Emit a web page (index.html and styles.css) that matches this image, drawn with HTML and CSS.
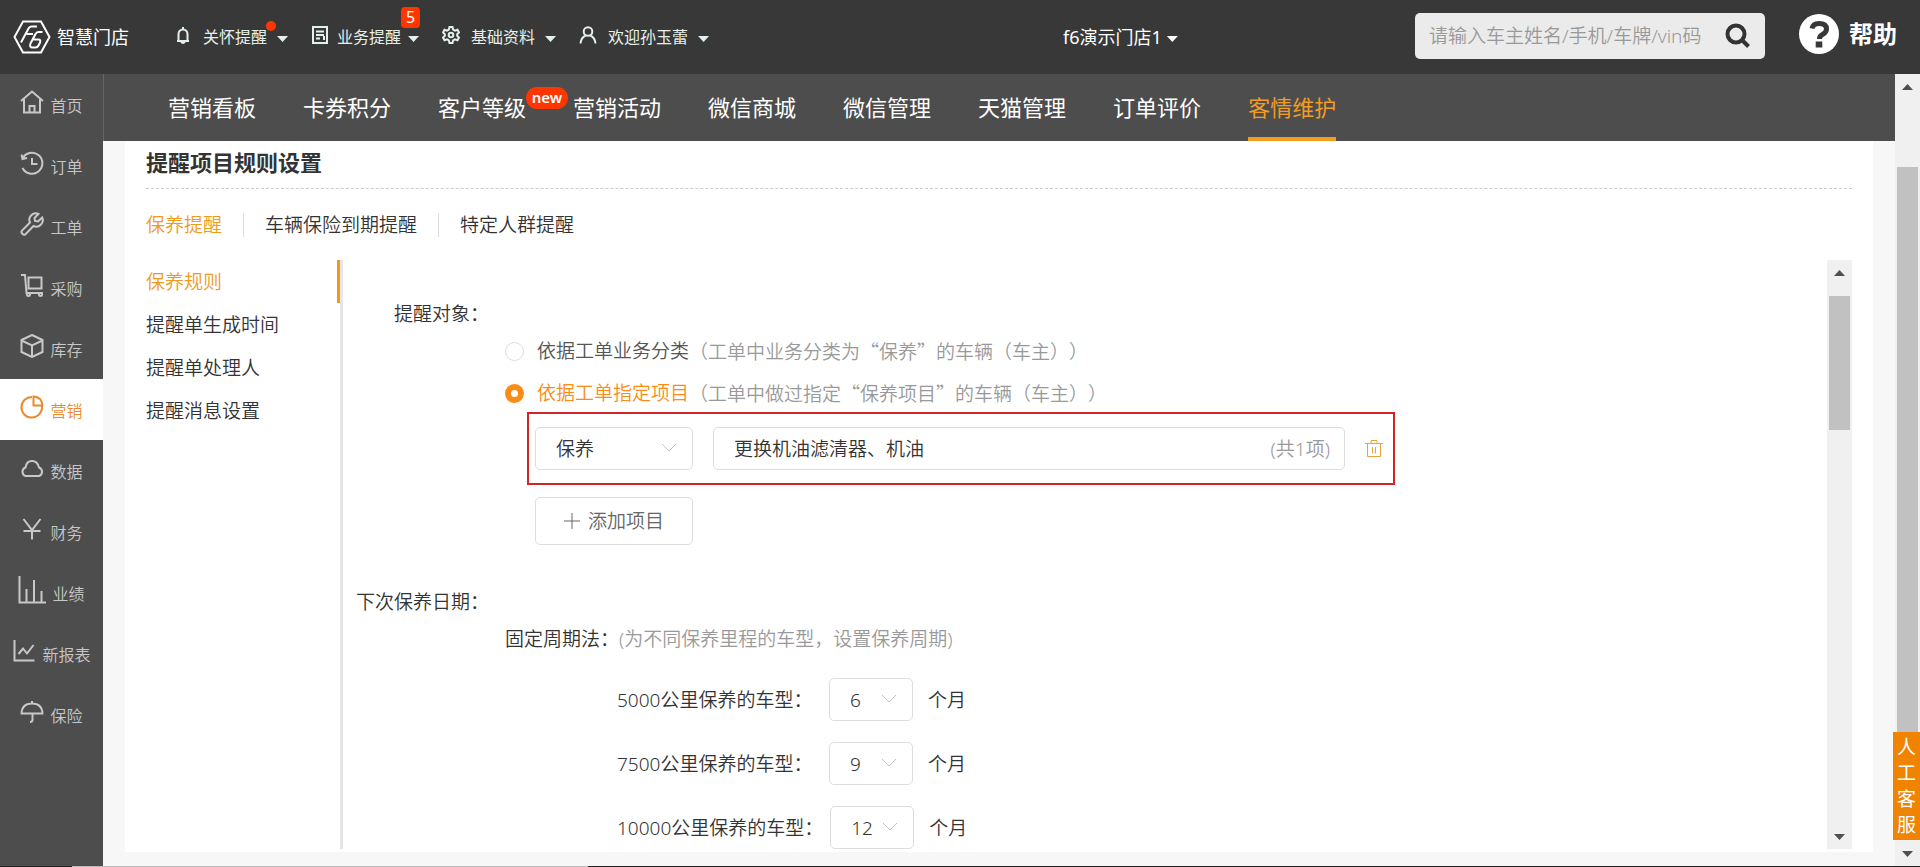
FILE: index.html
```
<!DOCTYPE html>
<html lang="zh-CN">
<head>
<meta charset="utf-8">
<title>智慧门店 - 提醒项目规则设置</title>
<link rel="stylesheet" href="styles.css">
</head>
<body>
<header class="topbar">
  <a class="brand" href="#">
    <svg class="brand-mark" viewBox="0 0 38 34" aria-hidden="true"><path d="M10 1.500h18L36.500 17 28 32.500H10L1.500 17z"/><path d="M24 6.500h-5.500q-2 0-3 2L8 22.500M13.500 14H20"/><path d="M29.500 12h-4q-2 0-3 2l-5 9.500q-1.500 4 2 4h3q2 0 3-2l1.500-3q1-3-1.500-3h-5"/></svg>
    <span class="brand-name">智慧门店</span>
  </a>
  <nav class="tools" aria-label="工具">
    <a class="tool" href="#">
      <svg class="tool-icon" viewBox="0 0 18 18"><path d="M3 15h12M4.500 15V8a4.500 4.500 0 0 1 9 0v7M9 1v2.500M7 15.500q2 3 4 0"/></svg>
      <span class="tool-text">关怀提醒<i class="dot"></i></span><i class="caret"></i>
    </a>
    <a class="tool tool-tight" href="#">
      <svg class="tool-icon" viewBox="0 0 18 18"><path d="M2 1h14v16H2zM5 5.500h8M5 9h8M5 12.500h4M13 10v4"/></svg>
      <span class="tool-text">业务提醒<b class="count">5</b></span><i class="caret"></i>
    </a>
    <a class="tool" href="#">
      <svg class="tool-icon" viewBox="0 0 18 18"><path d="M7.500 1h3l.6 2.500 1.900 1.100 2.500-.8 1.500 2.600L15.200 8.200v1.600l1.800 1.800-1.500 2.600-2.500-.8-1.900 1.100-.6 2.500h-3l-.6-2.500L5 13.400l-2.500.8L1 11.600l1.800-1.800V8.200L1 6.400l1.500-2.600L5 4.600l1.900-1.100z"/><circle cx="9" cy="9" r="2.300"/></svg>
      <span class="tool-text">基础资料</span><i class="caret"></i>
    </a>
    <a class="tool" href="#">
      <svg class="tool-icon" viewBox="0 0 18 18"><circle cx="9" cy="5.500" r="4.300"/><path d="M1.500 17.500q.5-6 5-7.800M16.500 17.500q-.5-6-5-7.800"/></svg>
      <span class="tool-text">欢迎孙玉蕾</span><i class="caret"></i>
    </a>
  </nav>
  <button class="store" type="button">f6演示门店1<i class="caret"></i></button>
  <form class="search">
    <input class="search-input" type="text" aria-label="搜索" placeholder="请输入车主姓名/手机/车牌/vin码">
    <button class="search-btn" type="button" aria-label="查询"><svg class="search-icon" viewBox="0 0 26 26"><circle cx="11" cy="11" r="8.500"/><path d="M17.500 17.500l6 6"/></svg></button>
  </form>
  <a class="help" href="#">
    <svg class="help-icon" viewBox="0 0 40 40" aria-hidden="true"><circle cx="20" cy="20" r="20"/><path d="M13 14.500q1-5 7-5 7.500 0 7.500 5.500 0 3.500-4 5.500-3 1.500-3 4.500"/><path d="M16.700 27.500h6.600v6h-6.600z" class="help-dot"/></svg>
    帮助
  </a>
</header>

<div class="shell">
  <nav class="sidebar" aria-label="主菜单">
    <a class="side" href="#"><svg class="side-icon" viewBox="0 0 24 24"><path d="M1 11L12 1.500 23 11M4 9v13.500h16V9M9.500 22.500V16h5v6.500"/></svg><span class="side-text">首页</span></a>
    <a class="side" href="#"><svg class="side-icon" viewBox="0 0 24 24"><path d="M2.500 7.500A10.500 10.500 0 1 1 2.500 17M1.500 3.500l1 4.500 4.500-1M12 7v6h5.500"/></svg><span class="side-text">订单</span></a>
    <a class="side" href="#"><svg class="side-icon" viewBox="0 0 24 24"><path d="M18.500 1.800a6.500 6.500 0 0 0-8.500 8.700L1.800 18.800q-1 1.500.5 3t3.200.5L13.500 14a6.500 6.500 0 0 0 8.700-8.500L18 9.500l-3-.5-.5-3z"/></svg><span class="side-text">工单</span></a>
    <a class="side" href="#"><svg class="side-icon" viewBox="0 0 24 24"><path d="M1 2h4l1.500 18H23M8.500 4.500h13v11h-13z"/><circle cx="8.500" cy="21.500" r="1.500"/><circle cx="20.500" cy="21.500" r="1.500"/></svg><span class="side-text">采购</span></a>
    <a class="side" href="#"><svg class="side-icon" viewBox="0 0 24 24"><path d="M12 1l10.500 5v12L12 23 1.500 18V6zM1.500 6.500L12 11.500l10.500-5M12 11.500V23"/></svg><span class="side-text">库存</span></a>
    <a class="side side-active" href="#"><svg class="side-icon" viewBox="0 0 24 24"><path d="M12 2A10.300 10.300 0 1 0 22 13V10.500H13.500V1.500Q22 2 22.500 10.500"/></svg><span class="side-text">营销</span></a>
    <a class="side" href="#"><svg class="side-icon" viewBox="0 0 24 24"><path d="M5.500 20h13.500a4.500 4.500 0 0 0 0-8.500Q17.500 5 12 5T5.500 11.500a4.500 4.500 0 0 0 0 8.500z"/></svg><span class="side-text">数据</span></a>
    <a class="side" href="#"><svg class="side-icon" viewBox="0 0 24 24"><path d="M3.500 2L12 13l8.500-11M3.500 14h17M12 13v9.500"/></svg><span class="side-text">财务</span></a>
    <a class="side" href="#"><svg class="side-icon side-icon-wide" viewBox="0 0 28 28"><path d="M1.500 0v26.500H28M8.500 26V13M16 26V4M23.500 26V15"/></svg><span class="side-text">业绩</span></a>
    <a class="side" href="#"><svg class="side-icon" viewBox="0 0 24 24"><path d="M2.500 1v20.500h20M6.500 15L11 9.500l4 5L21.500 6"/></svg><span class="side-text">新报表</span></a>
    <a class="side" href="#"><svg class="side-icon" viewBox="0 0 24 24"><path d="M12 1v2M1.500 13.500Q2 3.500 12 3.500t10.500 10zM12.500 13.500v6q0 2.500-2.500 2.500"/></svg><span class="side-text">保险</span></a>
  </nav>

  <div class="main">
    <nav class="modules" aria-label="模块">
      <a class="module" href="#">营销看板</a>
      <a class="module" href="#">卡券积分</a>
      <a class="module" href="#">客户等级<b class="new">new</b></a>
      <a class="module" href="#">营销活动</a>
      <a class="module" href="#">微信商城</a>
      <a class="module" href="#">微信管理</a>
      <a class="module" href="#">天猫管理</a>
      <a class="module" href="#">订单评价</a>
      <a class="module module-active" href="#">客情维护</a>
    </nav>

    <main class="card">
      <h1 class="title">提醒项目规则设置</h1>
      <nav class="tabs" aria-label="提醒类型">
        <a class="tab tab-active" href="#">保养提醒</a>
        <a class="tab" href="#">车辆保险到期提醒</a>
        <a class="tab" href="#">特定人群提醒</a>
      </nav>
      <div class="split">
        <nav class="steps" aria-label="设置项">
          <a class="step step-active" href="#">保养规则</a>
          <a class="step" href="#">提醒单生成时间</a>
          <a class="step" href="#">提醒单处理人</a>
          <a class="step" href="#">提醒消息设置</a>
        </nav>
        <form class="pane">
          <section class="field">
            <h2 class="field-label">提醒对象：</h2>
            <div class="field-body">
              <label class="choice"><input class="radio" type="radio" name="target"><span>依据工单业务分类</span><span class="hint">（工单中业务分类为“保养”的车辆（车主））</span></label>
              <label class="choice choice-on"><input class="radio" type="radio" name="target" checked><span>依据工单指定项目</span><span class="hint">（工单中做过指定“保养项目”的车辆（车主））</span></label>
              <div class="rule">
                <span class="picker picker-wide"><select class="select" aria-label="业务分类"><option>保养</option></select><svg class="chevron" viewBox="0 0 16 10"><path d="M1 1l7 7 7-7"/></svg></span>
                <span class="items"><input class="items-input" type="text" aria-label="保养项目" value="更换机油滤清器、机油"><span class="items-count">(共1项)</span></span>
                <button class="trash" type="button" aria-label="删除"><svg class="trash-icon" viewBox="0 0 18 18"><path d="M0 3.500h18M2.500 3.500v13h13v-13M6 3.500v-3h6v3M7.500 7v6.500M10.500 7v6.500"/></svg></button>
              </div>
              <button class="add" type="button"><svg class="plus" viewBox="0 0 16 16"><path d="M8 0v16M0 8h16"/></svg>添加项目</button>
            </div>
          </section>
          <section class="field">
            <h2 class="field-label">下次保养日期：</h2>
            <div class="field-body">
              <p class="method">固定周期法：<span class="note">(为不同保养里程的车型，设置保养周期)</span></p>
              <div class="period"><label class="period-label" for="m5">5000公里保养的车型：</label><span class="picker"><select class="select" id="m5"><option>6</option></select><svg class="chevron" viewBox="0 0 16 10"><path d="M1 1l7 7 7-7"/></svg></span>个月</div>
              <div class="period"><label class="period-label" for="m7">7500公里保养的车型：</label><span class="picker"><select class="select" id="m7"><option>9</option></select><svg class="chevron" viewBox="0 0 16 10"><path d="M1 1l7 7 7-7"/></svg></span>个月</div>
              <div class="period"><label class="period-label" for="m10">10000公里保养的车型：</label><span class="picker"><select class="select" id="m10"><option>12</option></select><svg class="chevron" viewBox="0 0 16 10"><path d="M1 1l7 7 7-7"/></svg></span>个月</div>
            </div>
          </section>
        </form>
        <div class="scroll scroll-pane" aria-hidden="true"><i class="arrow arrow-up"></i><i class="thumb"></i><i class="arrow arrow-down"></i></div>
      </div>
    </main>
  </div>

  <div class="scroll scroll-page" aria-hidden="true"><i class="arrow arrow-up"></i><i class="thumb"></i><i class="arrow arrow-down"></i></div>
</div>
<div class="edge"></div>
<a class="service" href="#">人工客服</a>
</body>
</html>
```

FILE: styles.css
```
* { box-sizing: border-box; }

body {
  margin: 0;
  height: 100vh;
  display: flex;
  flex-direction: column;
  overflow: hidden;
  position: relative;
  background: #f7f7f7;
  color: #333;
  font-family: "Noto Sans", "Noto Sans CJK SC", sans-serif;
  font-size: 19px;
  font-weight: 350;
  line-height: 24px;
  text-spacing-trim: space-all;
}

a { color: inherit; text-decoration: none; }
button, input, select { font: inherit; color: inherit; margin: 0; padding: 0; border: 0; background: none; }
svg { display: block; flex: none; fill: none; stroke: currentColor; stroke-width: 2; }
i { font-style: normal; }

/* top bar */
.topbar {
  flex: none;
  display: flex;
  align-items: center;
  height: 74px;
  padding: 0 23px 0 13px;
  background: #383838;
  color: #e4f0ea;
}
.brand { display: flex; align-items: center; gap: 6px; width: 161px; color: #fff; }
.brand-mark { width: 38px; height: 34px; }
.brand-name { font-size: 18px; font-weight: 400; }
.tools { display: flex; gap: 23px; font-size: 16px; font-weight: 400; }
.tool { display: flex; align-items: center; gap: 11px; }
.tool-tight { gap: 8px; }
.tool-icon { width: 18px; height: 18px; margin-bottom: 4px; }
.tool-text { position: relative; }
.caret {
  width: 11px;
  height: 6px;
  margin: 4px 0 0 -1px;
  background: currentColor;
  clip-path: polygon(0 0, 100% 0, 50% 100%);
}
.dot { position: absolute; top: -4px; right: -9px; width: 10px; height: 10px; border-radius: 50%; background: #ff3600; }
.count {
  position: absolute;
  top: -18px;
  right: -19px;
  width: 19px;
  height: 21px;
  border-radius: 4px;
  background: #ff3600;
  color: #fff;
  font-size: 16px;
  font-weight: 400;
  line-height: 21px;
  text-align: center;
}
.store { display: flex; align-items: center; gap: 6px; margin: 0 auto 0 354px; color: #fff; font-size: 18px; font-weight: 400; }
.search { display: flex; align-items: center; width: 350px; height: 46px; margin-bottom: 2px; padding: 0 14px; border-radius: 5px; background: #ebebeb; }
.search-input { flex: 1; min-width: 0; height: 46px; outline: 0; }
.search-input::placeholder { color: #999; }
.search-btn { color: #333; }
.search-icon { width: 26px; height: 26px; stroke-width: 4; }
.help { display: flex; align-items: center; gap: 10px; margin: 0 0 7px 34px; color: #fff; font-size: 24px; font-weight: 700; }
.help-icon { width: 40px; height: 40px; fill: #fff; stroke: none; }
.help-icon path { fill: none; stroke: #383838; stroke-width: 5; }
.help-icon .help-dot { fill: #383838; stroke: none; }

/* shell */
.shell { flex: 1; min-height: 0; display: flex; }
.sidebar { flex: none; width: 103px; background: #4d4d4d; color: #c8c8c8; font-size: 16px; }
.side { display: flex; align-items: center; justify-content: center; gap: 6px; height: 61px; }
.side-icon { width: 24px; height: 24px; margin-bottom: 5px; }
.side-icon-wide { width: 28px; height: 28px; }
.side-text { margin-top: 3px; }
.side-active { background: #fff; color: #ec8a2b; }
.main { flex: 1; min-width: 0; display: flex; flex-direction: column; }

.modules {
  flex: none;
  display: flex;
  gap: 47px;
  height: 67px;
  padding-left: 64px;
  border-left: 1px solid #666;
  background: #4d4d4d;
  color: #fff;
  font-size: 22px;
  font-weight: 400;
}
.module { position: relative; line-height: 67px; border-bottom: 4px solid transparent; white-space: nowrap; }
.module-active { color: #f39c1f; border-color: #f39c1f; }
.new {
  position: absolute;
  top: 13px;
  left: 100%;
  width: 42px;
  height: 22px;
  border-radius: 11px;
  background: #ff3600;
  font-size: 15px;
  font-weight: 600;
  line-height: 21px;
  text-align: center;
}

/* card */
.card { flex: 1; min-height: 0; display: flex; flex-direction: column; margin: 0 22px 14px; padding: 0 21px 3px; background: #fff; }
.title { margin: 0; padding: 5px 0 10px; border-bottom: 1px dashed #ccc; font-size: 22px; font-weight: 700; line-height: 32px; }
.tabs { display: flex; padding: 24px 0 23px; }
.tab { padding: 0 21px; border-left: 1px solid #ddd; }
.tab:first-child { padding-left: 0; border-left: 0; }
.tab-active, .step-active { color: #f09a1c; }
.split { flex: 1; min-height: 0; display: flex; }
.steps { flex: none; width: 197px; border-right: 3px solid #e6e6e6; }
.step { display: block; height: 43px; line-height: 45px; }
.step-active { border-right: 3px solid #f09a1c; }

/* form */
.pane { flex: 1; min-width: 0; overflow: hidden; padding: 42px 0 0 1px; }
.field { display: grid; grid-template-columns: 145px 1fr; column-gap: 16px; margin-bottom: 45px; }
.field-label { margin: 0 0 13px; font-size: 19px; font-weight: 350; text-align: right; white-space: nowrap; }
.field-body { grid-column: 2; grid-row: 2; }
.choice { display: flex; align-items: center; margin-bottom: 18px; color: #555; }
.choice-on { margin-bottom: 7px; color: #fa8c16; }
.radio { appearance: none; width: 19px; height: 19px; margin-right: 13px; border: 1px solid #ddd; border-radius: 50%; background: #fff; }
.radio:checked { border: 6px solid #fa8c16; }
.hint { color: #999; font-family: "Noto Sans CJK SC", sans-serif; }
.rule { display: flex; align-items: center; width: 868px; margin: 0 0 12px 22px; padding: 13px 10px 13px 6px; border: 2px solid #d0252a; }
.picker { position: relative; display: flex; width: 84px; height: 43px; border: 1px solid #ddd; border-radius: 5px; }
.select { appearance: none; width: 100%; padding-left: 20px; outline: 0; }
.chevron { position: absolute; top: 15px; right: 15px; width: 16px; height: 10px; color: #c0c4cc; stroke-width: 1; pointer-events: none; }
.picker-wide { width: 158px; }
.items { flex: 1; display: flex; align-items: center; height: 43px; margin: 0 20px; padding: 0 14px 0 20px; border: 1px solid #ddd; border-radius: 5px; }
.items-input { flex: 1; min-width: 0; outline: 0; }
.items-count { color: #999; }
.trash { color: #e8a33a; }
.trash-icon { width: 18px; height: 18px; stroke-width: 1; }
.add { display: flex; align-items: center; justify-content: center; gap: 8px; width: 158px; height: 48px; margin-left: 30px; border: 1px solid #ddd; border-radius: 5px; color: #666; }
.plus { width: 16px; height: 16px; stroke-width: 1; }
.method { margin: 0 0 27px; }
.note { color: #999; }
.period { display: flex; align-items: center; margin: 0 0 21px 112px; }
.period-label { min-width: 205px; margin-right: 7px; }
.period .picker { margin-right: 15px; }

/* scroll bars */
.scroll { flex: none; display: flex; flex-direction: column; align-items: center; width: 25px; background: #f0f0f0; }
.arrow { width: 11px; height: 6px; background: #505050; }
.arrow-up { clip-path: polygon(50% 0, 100% 100%, 0 100%); }
.arrow-down { margin: auto 0 9px; clip-path: polygon(0 0, 100% 0, 50% 100%); }
.thumb { width: 21px; background: #c1c1c1; }
.scroll .arrow-up { margin-top: 10px; }
.scroll-pane .thumb { height: 134px; margin-top: 20px; }
.scroll-page .thumb { flex: 1; margin: 77px 0 112px; }

.edge { flex: none; height: 1px; background: linear-gradient(90deg, #222 0 72px, #bbb 72px 588px, #222 588px); }

.service {
  position: absolute;
  right: 0;
  bottom: 27px;
  width: 27px;
  padding: 2px 4px;
  background: #f08300;
  color: #fff;
  font-weight: 400;
  line-height: 26px;
}
```
